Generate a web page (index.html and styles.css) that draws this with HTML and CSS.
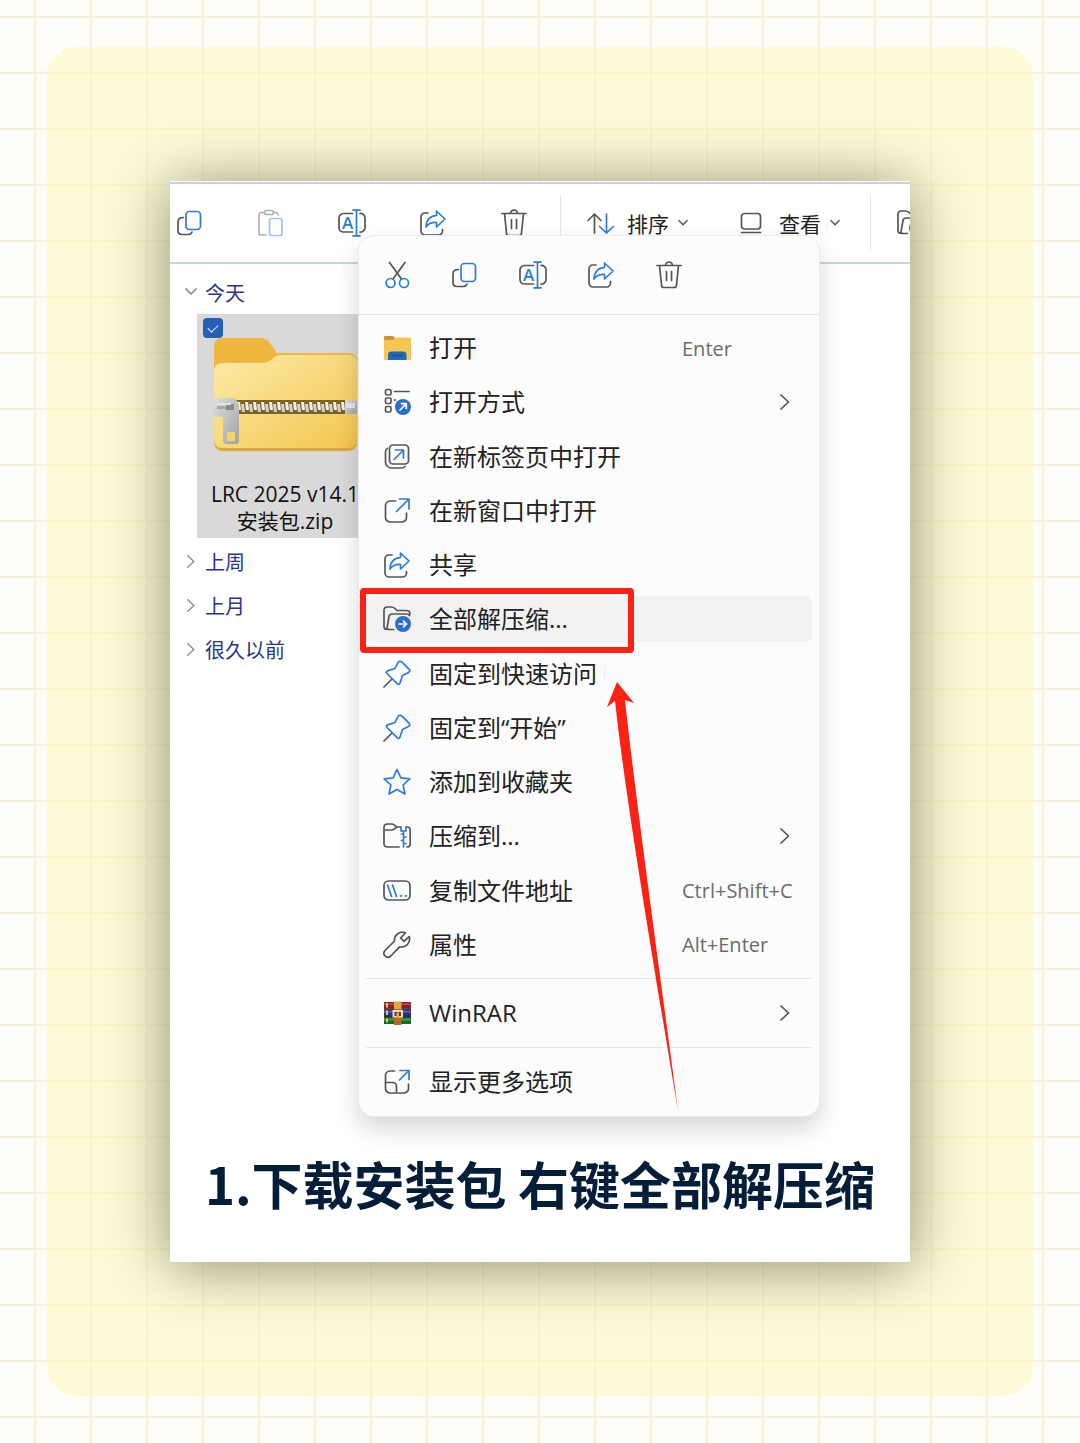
FILE: index.html
```html
<!DOCTYPE html>
<html lang="zh-CN">
<head>
  <meta charset="utf-8">
  <meta name="viewport" content="width=device-width, initial-scale=1">
  <title>1.下载安装包 右键全部解压缩</title>
  <link rel="stylesheet" href="styles.css">
</head>
<body>

<!-- Icon sprite, every symbol is on a 28 x 28 grid -->
<svg class="sprite" aria-hidden="true">
  <symbol id="i-copy" viewBox="0 0 28 28">
    <path d="M7.5 8.5C3.5 8.5 2 10 2 13v8.500c0 2.500 1.500 4 4 4h6c2 0 3.500-1 4-2.500"/>
    <rect class="b" x="10" y="2.500" width="14.500" height="18" rx="3.500"/>
  </symbol>
  <symbol id="i-paste" viewBox="0 0 28 28">
    <path d="M7 3.500H4.500a2.500 2.500 0 0 0-2.500 2.500v18a2 2 0 0 0 2 2h5M16.500 3.500H19a2.500 2.500 0 0 1 2.500 2.500"/>
    <rect x="7.500" y="1.500" width="9" height="4" rx="2"/>
    <rect class="b" x="12.500" y="9.500" width="12.500" height="17" rx="2"/>
  </symbol>
  <symbol id="i-rename" viewBox="0 0 28 28">
    <path d="M14.500 4.500H5.500a4.500 4.500 0 0 0-4.500 4.500v9.500A4.500 4.500 0 0 0 5.500 23h9M22 4.500a4.500 4.500 0 0 1 5 4.500v9.500a4.500 4.500 0 0 1-5 4.500"/>
    <path class="b" d="M15 1.200h7M15 26.800h7M18.500 1.200v25.600"/>
    <text class="letter" x="4" y="19.500">A</text>
  </symbol>
  <symbol id="i-share" viewBox="0 0 28 28">
    <path d="M9 4H6a4 4 0 0 0-4 4v14a4 4 0 0 0 4 4h13.500a4 4 0 0 0 4-4v-1.500"/>
    <path class="b" d="M17.500 2l8.500 8-8.500 8v-4.500C12.500 13.200 9.500 14.500 7 18c.3-6.500 4-11 10.500-11.500z"/>
  </symbol>
  <symbol id="i-trash" viewBox="0 0 28 28">
    <path d="M2 4.500h24M10.500 4.500a3.500 3.300 0 0 1 7 0M4.500 4.500l2 19.500a2.500 2.500 0 0 0 2.500 2.500h10a2.500 2.500 0 0 0 2.500-2.500l2-19.500M11.500 10.500v9M16.500 10.500v9"/>
  </symbol>
  <symbol id="i-cut" viewBox="0 0 28 28">
    <path d="M6.500 1.500L18.500 18M22 1.500L10 18"/>
    <circle class="b" cx="7.500" cy="22" r="4.500"/>
    <circle class="b" cx="21" cy="22" r="4.500"/>
  </symbol>
  <symbol id="i-sort" viewBox="0 0 28 28">
    <path d="M7.500 24V5M1 11.500L7.500 5l6.500 6.500"/>
    <path class="b" d="M19.500 5v19M12.500 17.500l7 6.500 7-6.500"/>
  </symbol>
  <symbol id="i-view" viewBox="0 0 28 28">
    <rect x="2.500" y="4.500" width="19" height="15.500" rx="3"/>
    <path d="M2.500 23.500h19"/>
  </symbol>
  <symbol id="i-folder" viewBox="0 0 28 28">
    <path class="f-tab" d="M1 3.500c0-1 .5-1.500 1.500-1.500h7.500l2.500 2.500-2.500 3H1z"/>
    <path class="f-body" d="M1 6h9l2.500-2.500H27c.6 0 1 .4 1 1V26H1z"/>
    <path class="f-blue" d="M5 26v-5c0-2 1-3.500 3-3.500h12.500c2 0 3 1.500 3 3.500v5z"/>
    <path class="f-slot" d="M10 21.500h8.500"/>
  </symbol>
  <symbol id="i-openwith" viewBox="0 0 28 28">
    <rect x="2.500" y="1.500" width="5.500" height="5.500" rx="1.500"/>
    <rect x="2.500" y="10" width="5.500" height="5.500" rx="1.500"/>
    <rect x="2.500" y="18.500" width="5.500" height="5.500" rx="1.500"/>
    <path d="M11.500 3.500H26M11.500 12h1"/>
    <circle class="disc" cx="20" cy="19" r="8"/>
    <path class="w" d="M17 22l6-6M18.500 15.700H23.300V20.500"/>
  </symbol>
  <symbol id="i-newtab" viewBox="0 0 28 28">
    <rect x="6.500" y="2" width="19" height="19" rx="3.500"/>
    <path d="M4.300 5.500C3 6.300 2.500 7.500 2.500 9v10a6 6 0 0 0 6 6H18c2 0 3.200-.5 4-1.500"/>
    <path class="b" d="M11 16.500l9.500-9.500M12.500 7h8v8"/>
  </symbol>
  <symbol id="i-newwin" viewBox="0 0 28 28">
    <path d="M12.500 4H7a4.500 4.500 0 0 0-4.500 4.500v12A4.500 4.500 0 0 0 7 25h12a4.500 4.500 0 0 0 4.500-4.500V16"/>
    <path class="b" d="M13.500 14.500L26 2M16.500 2H26v10"/>
  </symbol>
  <symbol id="i-extract" viewBox="0 0 28 28">
    <path d="M4.500 24.500C2.500 24.500 1 23.500 1 21.500V5.500C1 3 2.500 2 4.500 2h4c1.500 0 2.500.5 3.500 1.500L14 5.500h9c2.500 0 4 1.500 4 3.500M10.500 24.500H6c-1.500 0-2-1-1.800-2.500L6 11.500C6.400 9.700 7.500 9 9 9h14c2 0 3 .5 3.500 1.500"/>
    <circle class="disc" cx="20" cy="19" r="8"/>
    <path class="w" d="M16 19h7.500M20.500 16l3 3-3 3"/>
  </symbol>
  <symbol id="i-pin" viewBox="0 0 28 28">
    <path d="M1 27l8-8"/>
    <path class="b" d="M19 2.200l7 7c1.300 1.300.8 2.500-.5 3.200L19.500 15.500 17 23c-.5 1.500-1.600 1.800-2.600.8L4 13.500c-1-1-.7-2.200.6-2.600L12 8.500l2.800-5.700c.9-1.700 2.800-2 4.200-.6z"/>
  </symbol>
  <symbol id="i-star" viewBox="0 0 28 28">
    <path class="b" d="M14 1.500l3.800 8.300 9 1-6.700 6.200 1.900 9-8-4.600L6 26l1.900-9L1.200 10.800l9-1z"/>
  </symbol>
  <symbol id="i-zip" viewBox="0 0 28 28">
    <path d="M1 8V5.500C1 3.300 2.300 2 4.500 2h4c1 0 2 .4 3 1.200L13.500 5H17M1 8v13.500C1 23.700 2.500 25 4.500 25H16M1 8h7.500c1.200 0 2-.3 3-1.200L13.500 5M24 5c2 0 3.200 1.300 3.200 3.500v13c0 2.200-1.200 3.500-3.200 3.500"/>
    <path class="b" d="M18 4.500v4.500h5V4.500M20.500 9v3h-2M20.500 12v3h2.500M20.500 15v3.500h-2M20.500 18.500v3h2.500M20.500 21.500V25"/>
  </symbol>
  <symbol id="i-path" viewBox="0 0 28 28">
    <rect x="1" y="4" width="26" height="19" rx="4.500"/>
    <path class="b" d="M4.500 8l4 11.500M9.500 8l4 11.500M17.500 18.800h1M22.500 18.800h1"/>
  </symbol>
  <symbol id="i-wrench" viewBox="0 0 28 28">
    <path d="M22.500 1.800c-5.500-2-11.500 1.700-11 8.200L2 19.500c-3.500 4 2 9 5.800 5.500l8.700-9.200c6 1.500 11.500-3.800 9.800-10.300L21 10.300l-3.300-3.200z"/>
  </symbol>
  <symbol id="i-winrar" viewBox="0 0 28 28">
    <g stroke="none">
      <path fill="#8c1d34" d="M1 3h27v6.500H1z"/><path fill="#c1476a" d="M1 4.500h27v1.500H1z"/>
      <path fill="#2d2f8f" d="M1 10.500h27v6.500H1z"/><path fill="#5b66cf" d="M1 12h27v1.500H1z"/>
      <path fill="#17692a" d="M1 18h27v7H1z"/><path fill="#41a349" d="M1 19.500h27v2H1z"/>
      <path fill="#e8c34a" d="M3 4h2v4.500H3zM3 11.500h2v4.500H3zM3 19.500h2v4H3z"/>
      <path fill="#40251a" d="M1 9.200h27v1.500H1zM1 16.700h27v1.500H1z"/>
      <path fill="#dcab3c" d="M11 2.500h7.500v8H11z"/><path fill="#b4692b" d="M11 10.500h7.500V26H11z"/>
      <path fill="#e5d8c8" d="M9.500 11h10.500v7.500H9.500z"/><path fill="#6b3a1d" d="M11.500 13h6.500v4h-6.500z"/>
      <path fill="#e9a152" d="M13.500 13.500h2.500v5h-2.500z"/>
    </g>
  </symbol>
  <symbol id="i-more" viewBox="0 0 28 28">
    <path d="M11.500 3H7a4.500 4.500 0 0 0-4.500 4.500v13A4.500 4.500 0 0 0 7 25h14a4.500 4.500 0 0 0 4.500-4.500V16M2.500 14.500h7a4 4 0 0 1 4 4V25"/>
    <path class="b" d="M16.500 12L26 2.500M17 2.500h9v9"/>
  </symbol>
  <symbol id="i-right" viewBox="0 0 10 16"><path d="M1 1l7.500 7L1 15"/></symbol>
  <symbol id="i-down" viewBox="0 0 12 8"><path d="M1 1l5 5 5-5"/></symbol>
</svg>

<main class="sheet">
  <article class="card">
    <div class="stage">

      <section class="explorer">
        <div class="toolbar">
          <button aria-label="复制"><svg class="icon"><use href="#i-copy"/></svg></button>
          <button class="off" aria-label="粘贴"><svg class="icon"><use href="#i-paste"/></svg></button>
          <button aria-label="重命名"><svg class="icon"><use href="#i-rename"/></svg></button>
          <button aria-label="共享"><svg class="icon"><use href="#i-share"/></svg></button>
          <button aria-label="删除"><svg class="icon"><use href="#i-trash"/></svg></button>
          <span class="divider"></span>
          <button class="drop"><svg class="icon"><use href="#i-sort"/></svg>排序<svg class="down"><use href="#i-down"/></svg></button>
          <button class="drop view"><svg class="icon"><use href="#i-view"/></svg>查看<svg class="down"><use href="#i-down"/></svg></button>
          <span class="divider"></span>
          <button aria-label="全部解压缩"><svg class="icon"><use href="#i-extract"/></svg></button>
        </div>

        <div class="files">
          <button class="group" aria-expanded="true"><svg class="down"><use href="#i-down"/></svg>今天</button>
          <div class="tile">
            <input type="checkbox" id="zip" class="check" checked>
            <svg class="zip" viewBox="0 0 144 114" aria-hidden="true">
              <defs>
                <linearGradient id="front" x1="0" y1="0" x2="1" y2="1">
                  <stop offset="0" stop-color="#fdeaa8"/><stop offset="1" stop-color="#f3c64e"/>
                </linearGradient>
                <linearGradient id="metal" x1="0" y1="0" x2="1" y2="1">
                  <stop offset="0" stop-color="#dedede"/><stop offset="1" stop-color="#a3a3a3"/>
                </linearGradient>
                <pattern id="teeth" width="8" height="14" patternUnits="userSpaceOnUse" y="62">
                  <path fill="#7a6427" d="M0 0h8v14H0z"/>
                  <path fill="#f1efe8" d="M0 2h3l1 8H1z"/>
                  <path fill="#d5d2c8" d="M4 4h3l1 8H5z"/>
                </pattern>
              </defs>
              <path fill="#efb73e" d="M1 40V9c0-6 3-9 9-9h36c5 0 9 2 11 5l7 10h71c6 0 9 3 9 9v20z"/>
              <path fill="#dda63b" d="M1 60h143v43c0 6-3 10-9 10H10c-6 0-9-4-9-10z"/>
              <path fill="url(#front)" d="M1 34c0-6 3-9 9-9h38c4 0 7-1 10-3l5-4c2-1 4-1 6-1h66c6 0 9 3 9 9v75c0 6-3 9-9 9H10c-6 0-9-3-9-9z"/>
              <path fill="url(#teeth)" d="M22 62h112v14H22z"/>
              <path fill="url(#metal)" d="M0 63c0-2 2-3 4-3h14c5 0 8 4 8 9v34c0 2-1 3-3 3H13c-2 0-3-1-3-3V79H4c-2 0-4-1-4-3z"/>
              <path fill="#f6d36b" d="M14 94h8v9h-8z"/>
              <path fill="#a8a8a8" d="M4 68h9v3H4z"/>
              <path fill="#8a8a8a" d="M13 66h8v6h-8z"/>
              <path fill="#e4e4e4" d="M4 65h14v2H4z"/>
              <path fill="url(#metal)" d="M132 62h12v14h-12z"/>
              <path fill="#e8e8e8" d="M133 65h9v5h-9z"/>
            </svg>
            <label for="zip">LRC 2025 v14.1<br>安装包.zip</label>
          </div>
          <button class="group"><svg class="right"><use href="#i-right"/></svg>上周</button>
          <button class="group"><svg class="right"><use href="#i-right"/></svg>上月</button>
          <button class="group"><svg class="right"><use href="#i-right"/></svg>很久以前</button>
        </div>
      </section>

      <nav class="menu">
        <div class="quick">
          <button aria-label="剪切"><svg class="icon"><use href="#i-cut"/></svg></button>
          <button aria-label="复制"><svg class="icon"><use href="#i-copy"/></svg></button>
          <button aria-label="重命名"><svg class="icon"><use href="#i-rename"/></svg></button>
          <button aria-label="共享"><svg class="icon"><use href="#i-share"/></svg></button>
          <button aria-label="删除"><svg class="icon"><use href="#i-trash"/></svg></button>
        </div>
        <ul class="items main">
          <li><button class="item"><svg class="icon"><use href="#i-folder"/></svg>打开<kbd>Enter</kbd></button></li>
          <li><button class="item"><svg class="icon"><use href="#i-openwith"/></svg>打开方式<svg class="right"><use href="#i-right"/></svg></button></li>
          <li><button class="item"><svg class="icon"><use href="#i-newtab"/></svg>在新标签页中打开</button></li>
          <li><button class="item"><svg class="icon"><use href="#i-newwin"/></svg>在新窗口中打开</button></li>
          <li><button class="item"><svg class="icon"><use href="#i-share"/></svg>共享</button></li>
          <li class="marked"><button class="item current"><svg class="icon"><use href="#i-extract"/></svg>全部解压缩...</button></li>
          <li><button class="item"><svg class="icon"><use href="#i-pin"/></svg>固定到快速访问</button></li>
          <li><button class="item"><svg class="icon"><use href="#i-pin"/></svg>固定到“开始”</button></li>
          <li><button class="item"><svg class="icon"><use href="#i-star"/></svg>添加到收藏夹</button></li>
          <li><button class="item"><svg class="icon"><use href="#i-zip"/></svg>压缩到...<svg class="right"><use href="#i-right"/></svg></button></li>
          <li><button class="item"><svg class="icon"><use href="#i-path"/></svg>复制文件地址<kbd>Ctrl+Shift+C</kbd></button></li>
          <li><button class="item"><svg class="icon"><use href="#i-wrench"/></svg>属性<kbd>Alt+Enter</kbd></button></li>
        </ul>
        <ul class="items">
          <li><button class="item"><svg class="icon"><use href="#i-winrar"/></svg>WinRAR<svg class="right"><use href="#i-right"/></svg></button></li>
        </ul>
        <ul class="items">
          <li><button class="item"><svg class="icon"><use href="#i-more"/></svg>显示更多选项</button></li>
        </ul>
        <svg class="arrow" viewBox="0 0 72 430" aria-hidden="true">
          <path d="M10 0L27 21 18 18C29 120 53 290 71 429 48 290 19 120 8 19L0 25z"/>
        </svg>
      </nav>

    </div>
    <h1 class="caption">1.下载安装包 右键全部解压缩</h1>
  </article>
</main>

</body>
</html>
```
FILE: styles.css
```css
*,
*::before,
*::after { box-sizing: border-box; }
body {
  margin: 0;
  padding: 47px;
  font-family: "Open Sans", "Noto Sans CJK SC", sans-serif;
  color: #222;
  background-color: #fffdf9;
  background-image:
    linear-gradient(#faf0d8 2px, transparent 2px),
    linear-gradient(90deg, #faf0d8 2px, transparent 2px);
  background-size: 56px 56px;
  background-position: 34px 16px;
}
button {
  display: flex;
  align-items: center;
  padding: 0;
  border: 0;
  background: none;
  font: inherit;
  color: inherit;
  text-align: left;
  white-space: nowrap;
}
svg {
  flex: none;
  fill: none;
  stroke: #555;
  stroke-width: 1.7;
  stroke-linecap: round;
  stroke-linejoin: round;
}
.sprite { display: none; }
.icon { width: 28px; height: 28px; }
.right { width: 10px; height: 16px; }
.down { width: 12px; height: 8px; }

/* parts inside the symbols */
.b { stroke: #2f7bd6; }
.w { stroke: #fff; }
.disc { fill: #2b6fcb; stroke: none; }
.letter {
  fill: #2f7bd6;
  stroke: none;
  font: 600 17px "Open Sans", sans-serif;
}
.f-tab { fill: #c9963a; stroke: none; }
.f-body { fill: #f5c654; stroke: none; }
.f-blue { fill: #2567b8; stroke: none; }
.f-slot { stroke: #184f96; }

.sheet {
  padding: 134px 123px;
  border-radius: 30px;
  background: rgba(252, 247, 184, 0.5);
}
.card {
  overflow: hidden;
  background: #fff;
  box-shadow: 0 4px 56px rgba(40, 40, 10, 0.52);
}

/* explorer window and menu share one cell, the menu lies on top */
.stage { display: grid; }
.explorer,
.menu {
  grid-area: 1 / 1;
  min-width: 0;
}
.explorer {
  overflow: hidden;
  margin-top: 1px;
  border-top: 2px solid #c9cee0;
}
.toolbar {
  display: flex;
  align-items: center;
  gap: 53px;
  height: 80px;
  padding-left: 6px;
  border-bottom: 2px solid #cbd2e2;
  font-size: 21px;
}
.toolbar .divider {
  flex: none;
  width: 1px;
  height: 56px;
  margin: 0 -27px 0 -21px;
  background: #e6e6e6;
}
.toolbar .off { opacity: 0.45; }
.drop { gap: 12px; }
.drop .down {
  width: 10px;
  margin-left: -3px;
}
.view { margin: 0 -2px; }

.files { padding-top: 6px; }
.group {
  gap: 8px;
  height: 44px;
  padding-left: 15px;
  font-size: 20px;
  color: #2b3488;
}
.group svg { stroke: #8a8a8a; }
.group .right {
  width: 12px;
  height: 13px;
}
.tile {
  position: relative;
  width: 176px;
  margin: 0 0 1px 27px;
  padding: 24px 0 3px;
  background: #d9d9d9;
  text-align: center;
  font-size: 21px;
  line-height: 27px;
  color: #111;
}
.tile .zip {
  display: block;
  width: 144px;
  height: 114px;
  margin: 0 auto 29px;
  stroke: none;
}
.tile label { display: block; }
.check {
  position: absolute;
  top: 4px;
  left: 6px;
  display: grid;
  place-items: center;
  width: 20px;
  height: 20px;
  margin: 0;
  border-radius: 4px;
  background: #285fb4;
  appearance: none;
}
.check:checked::before {
  content: "";
  width: 10px;
  height: 6px;
  margin-bottom: 3px;
  border: solid #dff0ff;
  border-width: 0 0 1px 1px;
  transform: rotate(-45deg);
}

.menu {
  position: relative;
  margin: 54px 90px 0 188px;
  border: 1px solid #ececec;
  border-radius: 16px;
  background: #fcfcfc;
  box-shadow: 0 12px 24px rgba(0, 0, 0, 0.16);
}
.quick {
  display: flex;
  gap: 40px;
  height: 79px;
  padding: 0 24px;
  border-bottom: 1px solid #e6e6e6;
}
.items {
  display: grid;
  grid-auto-rows: 54px;
  margin: 0 7px;
  padding: 7px 0;
  list-style: none;
}
.items + .items { border-top: 1px solid #e6e6e6; }
.items.main {
  grid-auto-rows: 1fr;
  height: 663px;
  padding: 6px 0;
}
.items li {
  position: relative;
  padding: 4px 0;
}
.item {
  display: grid;
  grid-template-columns: 28px 1fr 130px;
  column-gap: 18px;
  width: 100%;
  height: 46px;
  padding-left: 17px;
  border-radius: 6px;
  font-size: 24px;
  line-height: 24px;
}
.item kbd {
  font: 20px "Open Sans", sans-serif;
  color: #6b6b6b;
}
.item .right {
  justify-self: end;
  margin-right: 22px;
}
.current { background: #f2f2f2; }

/* red marker and the arrow that points to it */
.marked::after {
  content: "";
  position: absolute;
  top: -4px;
  left: -6px;
  width: 274px;
  height: 65px;
  border: 6px solid #fb2113;
  border-radius: 4px;
}
.arrow {
  position: absolute;
  top: 446px;
  left: 248px;
  width: 72px;
  height: 430px;
  fill: #fb2113;
  stroke: none;
}

.caption {
  margin: 0;
  padding: 28px 0 41px;
  font: bold 51px/76px "Noto Sans CJK SC", sans-serif;
  text-align: center;
  white-space: nowrap;
  color: #021d38;
}
```
